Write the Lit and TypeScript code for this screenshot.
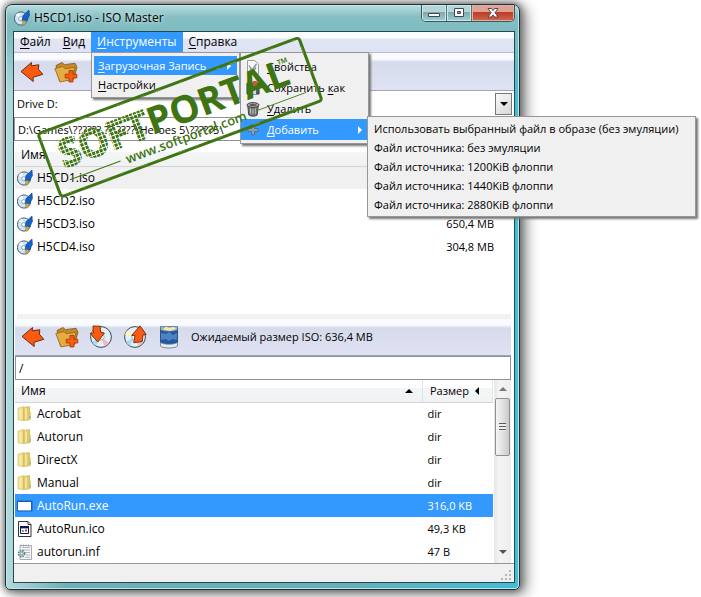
import { LitElement, html, svg, css, nothing, type TemplateResult } from "lit";
import { customElement, property, state } from "lit/decorators.js";
import { classMap } from "lit/directives/class-map.js";

interface Entry {
  name: string;
  size: string;
  icon: () => TemplateResult;
  state?: "active" | "selected";
}

const discIcon = () => html`<svg class="i16" viewBox="0 0 16 16" aria-hidden="true">
  <circle cx="7" cy="8.5" r="6.6" fill="#cfe6f3" stroke="#4b5a66"/>
  <path d="M7 8.5 1.5 5.5A6 6 0 0 1 5 2.8Z" fill="#f4fbff"/>
  <path d="M7 8.5 12.6 11A6 6 0 0 1 8.5 14.3Z" fill="#8fd0ee"/>
  <circle cx="6.6" cy="8.6" r="2" fill="#fff" stroke="#7d93a3" stroke-width=".8"/>
  <path d="M15 0 15.4 5.6 12.4 11 8.4 10.4 9 5.600Z" fill="#1463c8" stroke="#0d3d86" stroke-width=".6"/>
  <path d="m9 10.6 3 .5-1.6 3.9H8.8Z" fill="#e0b25a" stroke="#8b6420" stroke-width=".5"/>
</svg>`;

const folderIcon = () => html`<svg class="i16" viewBox="0 0 16 16" aria-hidden="true">
  <path d="M1 2.200 6.500.600v14l-5.500-.8Z" fill="#f0de8c" stroke="#d6c374" stroke-width=".7"/>
  <path d="M6.500 1.400 12.500.600v13.200l-6 .8Z" fill="#e2c966" stroke="#cbb45c" stroke-width=".7"/>
  <path d="M2 3.500 4.500 3v10.500L2 13Z" fill="#f5e9a6"/>
  <path d="M8 2.200h2v10.800l-2 .9Z" fill="#f3e49a"/>
  <path d="m12.500 5 1.300 1v7.600h-1.300Z" fill="#dcc569"/>
  <path d="M12.6 10h.9v2.400h-.9Z" fill="#57b3bb"/>
</svg>`;

const exeIcon = () => html`<svg class="i16" viewBox="0 0 16 16" aria-hidden="true">
  <path d="M0 2.5h15.5v11H0Z" fill="#1d5fae"/><path d="M1 4h13v8.4H1Z" fill="#fff"/>
</svg>`;

const icoIcon = () => html`<svg class="i16" viewBox="0 0 16 16" aria-hidden="true">
  <path d="M1.5.5h9.5l3 3v12H1.5Z" fill="#fff" stroke="#333"/><path d="M11 .5v3h3" fill="#ddd" stroke="#333"/>
  <path d="M3.5 5.5h8v7h-8Z" fill="#fff" stroke="#15154f"/><path d="M3 5h9v2.4H3Z" fill="#15154f"/>
  <path d="M4.8 9h2v2h-2Z" fill="#3fa1b5"/><path d="M8 8.6h2v2H8Z" fill="#c83c3c"/>
</svg>`;

const infIcon = () => html`<svg class="i16" viewBox="0 0 16 16" aria-hidden="true">
  <path d="M3 1.5h11.5v14H3Z" fill="#f4f6f7" stroke="#a7adb1"/>
  <path d="M5 3.5h8M5 6h8M8 8.5h5M9 11h4M8 13.3h5" stroke="#b4babd"/>
  <path d="M4 .5v2M6.5.5v2M9 .5v2M11.5.5v2" stroke="#8b9194" stroke-width=".8"/>
  <circle cx="4.6" cy="9.6" r="3" fill="#cfe2e4" stroke="#5d868b" stroke-width="1.8" stroke-dasharray="1.5 .9"/>
  <circle cx="4.6" cy="9.6" r="1.3" fill="#fff" stroke="#5d868b" stroke-width=".8"/>
</svg>`;

const backIcon = () => html`<svg class="i24" viewBox="0 0 24 24" aria-hidden="true">
  <path d="M1 11.500 11.500 2.500 11.200 5.800 18.800 4.800 18.400 9.300 22.800 14.300 13 17.300 13.200 21.500Z" fill="#fb5a10" stroke="#6b2a10" stroke-width="1" stroke-linejoin="round"/>
</svg>`;

const newFolderIcon = () => html`<svg class="i24" viewBox="0 0 24 24" aria-hidden="true">
  <path d="M2 5.500 8 2.500l2.500 2.200L21 3.200l2 4-3.500 12.300-14 1.500Z" fill="#c58a25" stroke="#7b541a" stroke-width=".8"/>
  <path d="M.8 8.500 9 6.500l2 2.200 10-1.500-2.500 12.300-12.500 2.500Z" fill="#e6ab42" stroke="#8f6420" stroke-width=".8"/>
  <path d="M15 10.500h4v3.700h3.800v3.800H19v4h-4v-4h-3.800v-3.800H15Z" fill="#fb5a10" stroke="#9a3a10" stroke-width=".8"/>
</svg>`;

const cd = svg`<circle cx="12" cy="12" r="10.400" fill="#e4f1f4" stroke="#3f4a52"/>
  <path d="M12 12 4 5.500A10 10 0 0 0 2.200 10Z" fill="#fff6b8"/>
  <path d="m12 12 3.500 9.200A10 10 0 0 0 20 17.500Z" fill="#f2b7c6"/>
  <path d="m12 12-9 4.500a10 10 0 0 0 4 4.300Z" fill="#a9dcec"/>
  <circle cx="12" cy="12" r="3.200" fill="#fff" stroke="#8b9aa3" stroke-width=".8"/>`;

const extractIcon = () => html`<svg class="i24" viewBox="0 0 24 24" aria-hidden="true">${cd}
  <path d="M4 1 11.200 1.200 11.600 7 15.400 8 8.800 17 1.200 8.500 4.200 8Z" fill="#fb5a10" stroke="#6b2a10" stroke-width=".9"/>
</svg>`;

const addIcon = () => html`<svg class="i24" viewBox="0 0 24 24" aria-hidden="true">${cd}
  <path d="M17 .800 23.200 9.500l-3.200.400-.700 6.600-8.600 1.200 1.300-7-3.300-.300Z" fill="#fb5a10" stroke="#6b2a10" stroke-width=".9"/>
</svg>`;

const trashIcon = () => html`<svg class="i24" viewBox="0 0 24 24" aria-hidden="true">
  <path d="M3.500 2.500h17v18.300c-2 2.600-15 2.600-17 0Z" fill="#2459a0" stroke="#1c3d6b" stroke-width=".8"/>
  <path d="m4 8 5 1 3-2 4 3 4-2-.3 7-4-1-4 2-3-2-4.700 1Z" fill="#4b83c4"/>
  <path d="M3.500 17.500c3 2.400 14 2.400 17 0v3.500c-2 2.600-15 2.600-17 0Z" fill="#e6ebee" stroke="#75828c" stroke-width=".6"/>
  <path d="M3.500 1.500h17v3.500c-3 1.800-14 1.800-17 0Z" fill="#9fb4c6" stroke="#4e6a84" stroke-width=".7"/>
  <path d="m6 4.500 3-3 3 1.500 5-1 2 2-6 2Z" fill="#f5e7ae"/>
</svg>`;

const propsIcon = () => html`<svg class="i16" viewBox="0 0 16 16" aria-hidden="true">
  <path d="M2.500 1.500h7L13.500 5v10h-11Z" fill="#f6f6f6" stroke="#9c9c9c"/>
  <path d="M4 6.500 7 11l4.500-6M5 9.500l3 3 3-4" fill="none" stroke="#8c8c8c" stroke-width="1.300"/>
</svg>`;
const saveIcon = () => html`<svg class="i16" viewBox="0 0 16 16" aria-hidden="true">
  <path d="M2 3h12v11H2Z" fill="#4d6a68" stroke="#2d3f3c"/><path d="M5 10h6v4H5Z" fill="#ddd"/>
  <path d="M8 1h4v4h2l-4 4-4-4h2Z" fill="#d8562f"/>
</svg>`;
const binIcon = () => html`<svg class="i16" viewBox="0 0 16 16" aria-hidden="true">
  <path d="m2.800 5 1 9c1.500 1.500 6.900 1.500 8.400 0l1-9Z" fill="#777" stroke="#444"/>
  <path d="M5.500 7.500v5M8 8v5M10.500 7.500v5" stroke="#bbb"/>
  <ellipse cx="8" cy="4" rx="6" ry="2.400" fill="#a5a5a5" stroke="#444"/><ellipse cx="8" cy="4" rx="3.500" ry="1" fill="#555"/>
</svg>`;
const plusIcon = () => html`<svg class="i16" viewBox="0 0 16 16" aria-hidden="true">
  <path d="M6.500 3h3v3.500H13v3H9.500V13h-3V9.500H3v-3h3.500Z" fill="#7ea2c4" stroke="#5b6f84"/>
</svg>`;

const key = (text: string) => html`<u>${text[0]}</u>${text.slice(1)}`;

@customElement("file-table")
export class FileTable extends LitElement {
  @property({ attribute: false }) entries: Entry[] = [];
  @property({ type: Boolean }) sized = false;

  static styles = css`
    :host { display: block; }
    table { width: 100%; border-collapse: collapse; table-layout: fixed; }
    th, td { height: 23px; padding: 0 0 0 2px; font-weight: 400; text-align: left; line-height: 16px; box-sizing: border-box; white-space: nowrap; }
    th { height: 22px; padding-left: 6px; background: linear-gradient(#fff 0 35%, #f4f5f7 36%, #f1f2f4); border-bottom: 1px solid #d5d5d5; }
    .size { width: 70px; padding-left: 5px; font-size: 11px; }
    th.size { padding-left: 7px; border-left: 1px solid #e2e3e5; border-right: 1px solid #e2e3e5; }
    .iso .size { width: 86px; padding: 0 18px 0 0; text-align: right; border: 0; }
    .cell { display: flex; align-items: center; gap: 4px; }
    .head { display: flex; align-items: center; justify-content: space-between; padding-right: 9px; }
    .size .head { justify-content: flex-start; gap: 5px; padding: 0; }
    .i16 { width: 16px; height: 16px; flex: none; }
    .arrow { width: 8px; height: 8px; }
    .active { background: #f0f0f0; }
    .selected { background: #3399ff; color: #fff; }
  `;

  render() {
    return html`<table class=${classMap({ iso: !this.sized })}>
      <thead><tr>
        <th><span class="head">Имя ${this.sized ? html`<svg class="arrow" viewBox="0 0 8 8"><path d="M0 6 4 2l4 4Z"/></svg>` : nothing}</span></th>
        <th class="size">${this.sized ? html`<span class="head">Размер <svg class="arrow" viewBox="0 0 8 8"><path d="M5 0v8L1 4Z"/></svg></span>` : nothing}</th>
      </tr></thead>
      <tbody>${this.entries.map((e) => html`<tr class=${e.state ?? ""}>
        <td><span class="cell">${e.icon()}${e.name}</span></td>
        <td class="size">${e.size}</td>
      </tr>`)}</tbody>
    </table>`;
  }
}

@customElement("app-root")
export class AppRoot extends LitElement {
  @state() private images: Entry[] = [
    { name: "H5CD1.iso", size: "", icon: discIcon, state: "active" },
    { name: "H5CD2.iso", size: "", icon: discIcon },
    { name: "H5CD3.iso", size: "650,4 MB", icon: discIcon },
    { name: "H5CD4.iso", size: "304,8 MB", icon: discIcon },
  ];

  @state() private files: Entry[] = [
    { name: "Acrobat", size: "dir", icon: folderIcon },
    { name: "Autorun", size: "dir", icon: folderIcon },
    { name: "DirectX", size: "dir", icon: folderIcon },
    { name: "Manual", size: "dir", icon: folderIcon },
    { name: "AutoRun.exe", size: "316,0 KB", icon: exeIcon, state: "selected" },
    { name: "AutoRun.ico", size: "49,3 KB", icon: icoIcon },
    { name: "autorun.inf", size: "47 B", icon: infIcon },
  ];

  static styles = css`
    :host { display: block; background: #fff; color: #000; font: 12px/16px "Open Sans", "Noto Sans", sans-serif; overflow: hidden; }
    * { box-sizing: border-box; }
    button, input, select { font: inherit; color: inherit; margin: 0; padding: 0; border: 0; background: none; border-radius: 0; }
    u { text-underline-offset: 2px; text-decoration-thickness: 1px; text-decoration-skip-ink: none; }
    .i16 { width: 16px; height: 16px; flex: none; display: block; }
    .i24 { width: 24px; height: 24px; display: block; }
    .window {
      position: relative; margin: 4px 181px 7px 5px; padding: 0 4px 6px 7px;
      border: 1px solid #17343a; border-radius: 7px 7px 5px 5px;
      background: linear-gradient(#bcdedf 0, #84bfc4 12px, #7dbbc0 28px, transparent 90px), linear-gradient(90deg, #b4dadc 0, #6fb0b5 60px, #62b0bb 70%, #45bdd4);
      box-shadow: inset 0 0 0 1px #c3e3e6, 0 0 7px 1px #666, 5px 3px 14px 1px #888;
    }
    .title { display: flex; height: 26px; align-items: center; gap: 4px; padding-left: 1px; text-shadow: 0 0 5px #fff; }
    .title h1 { flex: 1; margin: 0; font: inherit; }
    .controls { display: flex; align-self: flex-start; border: 1px solid #36575c; border-top: 0; border-radius: 0 0 5px 5px; overflow: hidden; }
    .controls button { width: 25px; height: 16px; display: grid; place-items: center; border-right: 1px solid #4f777b; background: linear-gradient(#b5d5d7 0 45%, #7ba9ad 46%, #9fd0d4); box-shadow: inset 0 0 0 1px #cfe6e7; }
    .controls .close { width: 42px; border: 0; background: linear-gradient(#e0a295 0 45%, #b93e25 46%, #d2664c); box-shadow: inset 0 0 0 1px #e4b0a5; }
    .controls svg { width: 14px; height: 12px; }
    .client { border: 1px solid #23484d; background: #fff; }
    .menubar { position: relative; display: flex; height: 21px; background: linear-gradient(#fbfcfe 0 6px, #e1e5f3 7px, #dfe3f4); border-bottom: 1px solid #b9bdc9; }
    .menubar > .entry > button { height: 20px; padding: 0 6px; }
    .entry { position: relative; }
    .open { background: #3399ff; color: #fff; }
    .menu { position: absolute; z-index: 2; margin: 0; padding: 3px 2px; list-style: none; font-size: 11px; color: #000; background: #f0f0f0; border: 1px solid #979797; box-shadow: 2px 2px 2px #777; }
    .menu li { position: relative; }
    .menu li > button { display: flex; align-items: center; width: 100%; height: 19px; white-space: nowrap; text-align: left; }
    .menu .grow { flex: 1; }
    .menu .tip { width: 8px; height: 8px; }
    .tools { top: 20px; left: 0; width: 149px; }
    .tools > li > button { padding: 0 4px; }
    .boot { top: -4px; left: 146px; width: 129px; padding: 3px 0; }
    .boot > li > button { height: 21px; gap: 6px; padding: 0 4px; }
    .source { top: -3px; left: 126px; width: 329px; padding: 2px; }
    .source > li > button { padding: 0 4px; }
    .toolbar { display: flex; align-items: center; gap: 10px; height: 38px; padding: 0 6px; background: linear-gradient(#fafbfe 0 6px, #d5dbeb 9px, #e0e2f4); border-bottom: 1px solid #a2a5b5; }
    .toolbar.lower { margin: 0 3px 0 1px; height: 37px; }
    .toolbar output { font-size: 11px; }
    .drive { position: relative; display: flex; height: 26px; align-items: center; }
    .drive select { appearance: none; width: 100%; height: 26px; padding-left: 3px; font-size: 11px; }
    .drive span { position: absolute; right: 2px; width: 17px; height: 22px; display: grid; place-items: center; background: linear-gradient(135deg, #fafafa, #d7d7d7); border: 1px solid #777; pointer-events: none; }
    .drive svg { width: 8px; height: 8px; }
    .path { display: block; width: calc(100% - 2px); height: 24px; padding: 0 3px; border: 1px solid #8f9297; font-size: 11px; }
    .path.lower { width: calc(100% - 4px); margin-left: 1px; font-size: 12px; }
    .images { min-height: 170px; margin: 3px 2px 0 1px; }
    .split { height: 5px; margin: 0 3px; background: #f2f2f2; }
    .files { display: flex; gap: 1px; margin: 0 3px 0 1px; }
    .files file-table { flex: 1; }
    .scroll { width: 17px; display: flex; flex-direction: column; align-items: center; padding: 5px 0 7px; background: linear-gradient(90deg, #e6e6e6, #f4f4f4 30%, #eee); }
    .scroll svg { width: 8px; height: 8px; flex: none; }
    .thumb { width: 15px; height: 58px; margin: 5px 0 auto; display: grid; place-items: center; background: linear-gradient(90deg, #f5f5f5, #e4e4e4 45%, #c9c9c9); border: 1px solid #8f8f8f; border-radius: 2px; }
    .thumb i { width: 7px; height: 8px; background: repeating-linear-gradient(#5c5c5c 0 1px, #eee 1px 3px); }
    .status { display: flex; justify-content: flex-end; align-items: flex-end; height: 19px; padding: 2px 3px; background: #f0f0f0; border-top: 1px solid #8f9b9b; }
    .status svg { width: 10px; height: 10px; }
    .stamp { position: absolute; z-index: 5; left: 22px; top: 20px; width: 310px; height: 180px; overflow: visible; pointer-events: none; }
    .stamp text { font-family: "Open Sans", "Noto Sans", sans-serif; font-weight: 700; fill: #3e7512; }
    .stamp .word { font-size: 38px; }
    .stamp .dots { fill: url(#grid); stroke: url(#grid); stroke-width: 2px; }
    .stamp .url { font-size: 13px; font-weight: 600; }
    .stamp .tm { font-size: 14px; }
  `;

  private tip = html`<svg class="tip" viewBox="0 0 8 8"><path d="M2 0v8l4-4Z" fill="#fff"/></svg>`;

  private bootMenu() {
    return html`<ul class="menu boot">
      <li><button>${propsIcon()}<span>${key("Свойства")}</span></button></li>
      <li><button>${saveIcon()}<span>Сохранить <u>к</u>ак</span></button></li>
      <li><button>${binIcon()}<span>${key("Удалить")}</span></button></li>
      <li><button class="open">${plusIcon()}<span class="grow">${key("Добавить")}</span>${this.tip}</button>
        <ul class="menu source">
          ${["Использовать выбранный файл в образе (без эмуляции)", "Файл источника: без эмуляции", "Файл источника: 1200KiB флоппи", "Файл источника: 1440KiB флоппи", "Файл источника: 2880KiB флоппи"].map(
            (t) => html`<li><button>${t}</button></li>`)}
        </ul>
      </li>
    </ul>`;
  }

  private stamp() {
    return html`<svg class="stamp" viewBox="0 0 310 180" aria-hidden="true">
      <defs><pattern id="grid" width="4" height="4" patternUnits="userSpaceOnUse"><path d="M0 0h3v3H0Z" fill="#3e7512"/></pattern></defs>
      <g transform="translate(10 109) rotate(-20.3)">
        <rect x="0" y="0" width="278" height="67" rx="3" fill="none" stroke="#3e7512" stroke-width="3"/>
        <rect x="1" y="1" width="276" height="65" rx="3" fill="none" stroke="#6f9a4a" stroke-width="1" stroke-dasharray="7 19 3 11"/>
        <text class="word" x="13" y="41"><tspan class="dots">SOFT</tspan>PORTAL</text>
        <text class="tm" x="249" y="24">™</text>
        <text class="url" x="74" y="59">www.softportal.com</text>
        <path d="M14 54h54M212 54h54" stroke="#3e7512" stroke-width="1"/>
      </g>
    </svg>`;
  }

  render() {
    return html`<main class="window">
      <header class="title">
        ${discIcon()}<h1>H5CD1.iso - ISO Master</h1>
        <div class="controls">
          <button aria-label="Свернуть"><svg viewBox="0 0 14 12"><path d="M1.500 6.500h11v3h-11Z" fill="#fff" stroke="#445"/></svg></button>
          <button aria-label="Развернуть"><svg viewBox="0 0 14 12"><path d="M2.500 1.500h9v8h-9Z" fill="#fff" stroke="#445"/><path d="M5.500 4.500h3v2h-3Z" fill="#8ab" stroke="#445"/></svg></button>
          <button class="close" aria-label="Закрыть"><svg viewBox="0 0 14 12"><path d="M2 1.500h3.500L7 3.600l1.500-2.100H12L9 5.700l3 4.300H8.500L7 7.900 5.500 10H2l3-4.300Z" fill="#fff" stroke="#534" stroke-width=".9"/></svg></button>
        </div>
      </header>
      <div class="client">
        <nav class="menubar">
          <div class="entry"><button>${key("Файл")}</button></div>
          <div class="entry"><button>${key("Вид")}</button></div>
          <div class="entry"><button class="open">${key("Инструменты")}</button>
            <ul class="menu tools">
              <li><button class="open"><span class="grow">${key("Загрузочная Запись")}</span>${this.tip}</button>${this.bootMenu()}</li>
              <li><button>${key("Настройки")}</button></li>
            </ul>
          </div>
          <div class="entry"><button>${key("Справка")}</button></div>
        </nav>
        <div class="toolbar">
          <button aria-label="Назад">${backIcon()}</button>
          <button aria-label="Новая папка">${newFolderIcon()}</button>
        </div>
        <div class="drive">
          <select aria-label="Диск"><option>Drive D:</option></select>
          <span><svg viewBox="0 0 8 8"><path d="M0 2h8L4 6Z"/></svg></span>
        </div>
        <input class="path" aria-label="Папка" .value=${"D:\\Games\\?????? ?? ????\\Heroes 5\\?????5\\"}>
        <file-table class="images" .entries=${this.images}></file-table>
        <div class="split"></div>
        <div class="toolbar lower">
          <button aria-label="Назад">${backIcon()}</button>
          <button aria-label="Новая папка">${newFolderIcon()}</button>
          <button aria-label="Извлечь">${extractIcon()}</button>
          <button aria-label="Добавить в образ">${addIcon()}</button>
          <button aria-label="Удалить">${trashIcon()}</button>
          <output>Ожидаемый размер ISO: 636,4 MB</output>
        </div>
        <input class="path lower" aria-label="Путь в образе" .value=${"/"}>
        <div class="files">
          <file-table sized .entries=${this.files}></file-table>
          <div class="scroll">
            <svg viewBox="0 0 8 8"><path d="M0 6 4 2l4 4Z" fill="#777"/></svg>
            <div class="thumb"><i></i></div>
            <svg viewBox="0 0 8 8"><path d="M0 2h8L4 6Z" fill="#555"/></svg>
          </div>
        </div>
        <footer class="status"><svg viewBox="0 0 10 10"><path d="M8 0h2v2H8ZM4 4h2v2H4ZM8 4h2v2H8ZM0 8h2v2H0ZM4 8h2v2H4ZM8 8h2v2H8Z" fill="#b5b5b5"/></svg></footer>
      </div>
      ${this.stamp()}
    </main>`;
  }
}
